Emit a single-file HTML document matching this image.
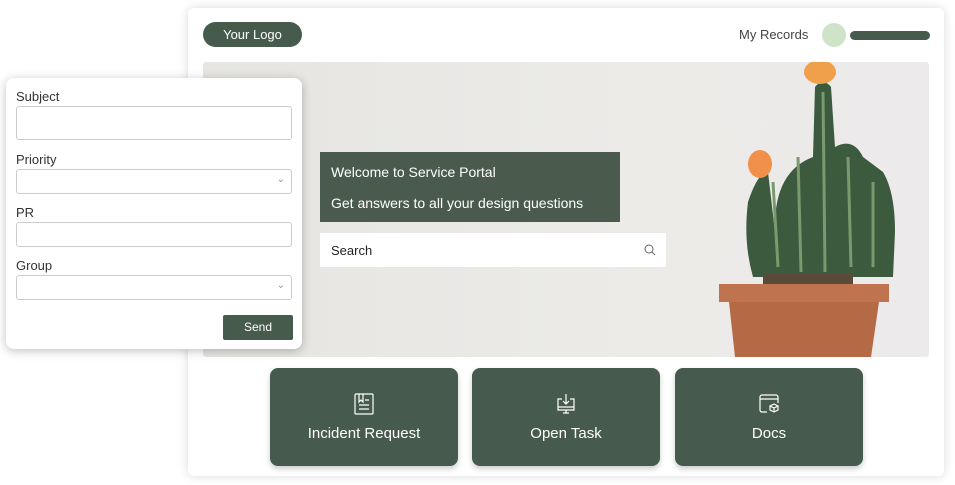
<!DOCTYPE html>
<html><head><style>
*{margin:0;padding:0;box-sizing:border-box}
body{width:955px;height:485px;background:#fff;font-family:"Liberation Sans",sans-serif;position:relative;overflow:hidden}
.a{position:absolute}
.main{left:188px;top:8px;width:756px;height:468px;background:#fff;border-radius:6px;box-shadow:0 0 10px rgba(0,0,0,.15)}
.logo{left:203px;top:22px;width:99px;height:25px;border-radius:13px;background:#475b4d;color:#fff;font-size:13px;text-align:center;line-height:25px}
.hero{left:203px;top:62px;width:726px;height:295px;background:linear-gradient(90deg,#e6e5e2,#ecebe8 60%,#eceaea);border-radius:3px;overflow:hidden}
.tile{top:368px;width:188px;height:98px;background:#465a4e;border-radius:8px;color:#fff;font-size:15px;text-align:center;box-shadow:0 3px 6px rgba(0,0,0,.2)}
.tile svg{display:block;margin:24px auto 9px}
.form{left:6px;top:78px;width:296px;height:271px;background:#fff;border-radius:8px;box-shadow:0 2px 10px rgba(0,0,0,.25)}
.lbl{font-size:13px;color:#333;left:10px}
.inp{left:10px;width:276px;border:1px solid #ccc;border-radius:3px;background:#fff}
</style></head><body>
<div class="a main"></div>
<div class="a logo">Your Logo</div>
<div class="a" style="left:739px;top:27px;font-size:13px;color:#444">My Records</div>
<div class="a" style="left:822px;top:23px;width:24px;height:24px;border-radius:50%;background:#cfe3c8"></div>
<div class="a" style="left:850px;top:31px;width:80px;height:9px;border-radius:5px;background:#475b4d"></div>
<div class="a hero">
 <svg class="a" style="left:510px;top:0" width="216" height="295">
  <path d="M62 170 Q60 110 100 95 L102 25 Q110 15 118 25 L122 85 Q140 75 150 95 L170 110 Q182 130 182 170 L180 215 L40 215 Q30 180 35 140 Q45 110 55 110 Z" fill="#3c5a3e"/>
  <ellipse cx="107" cy="10" rx="16" ry="12" fill="#f0a04a"/>
  <ellipse cx="47" cy="102" rx="12" ry="14" fill="#f0904a"/>
  <path d="M60 120 L65 205 M85 95 L88 210 M110 30 L112 210 M135 95 L138 205 M160 120 L160 205" stroke="#7a9a6e" stroke-width="3"/>
  <rect x="50" y="212" width="90" height="10" fill="#5a4a3a"/>
  <path d="M6 222 L176 222 L176 240 L166 240 L158 295 L22 295 L16 240 L6 240 Z" fill="#b56a46"/>
  <rect x="6" y="222" width="170" height="18" fill="#bf734f"/>
 </svg>
</div>
<div class="a" style="left:320px;top:152px;width:300px;height:70px;background:#4a5a4c;color:#fff;font-size:14px;padding:12px 11px;line-height:31px"><div style="line-height:16px">Welcome to Service Portal</div><div style="margin-top:15px;line-height:16px">Get answers to all your design questions</div></div>
<div class="a" style="left:320px;top:233px;width:346px;height:34px;background:#fff;font-size:13px;color:#222;padding:10px 11px">Search
 <svg class="a" style="right:10px;top:11px" width="12" height="12"><circle cx="5" cy="5" r="4" stroke="#666" fill="none"/><path d="M8 8l3 3" stroke="#666"/></svg></div>
<div class="a tile" style="left:270px"><svg width="24" height="24" fill="none" stroke="#fff" stroke-width="1.2"><rect x="3" y="2" width="18" height="20" rx="1"/><path d="M7 2v8l2-2 2 2V2M13 8h4M7 13h10M7 17h10"/></svg>Incident Request</div>
<div class="a tile" style="left:472px"><svg width="24" height="24" fill="none" stroke="#fff" stroke-width="1.2"><path d="M8 7H4v11h16V7h-4M12 2v10M9 9l3 3 3-3M4 15h16M12 18v3M9 21h6"/></svg>Open Task</div>
<div class="a tile" style="left:675px"><svg width="24" height="24" fill="none" stroke="#fff" stroke-width="1.2"><path d="M10 20H5a2 2 0 01-2-2V5a2 2 0 012-2h14a2 2 0 012 2v6M3 7h18"/><path d="M17 12l4 2v4l-4 2-4-2v-4zM13 14l4 2 4-2M17 16v4"/></svg>Docs</div>
<div class="a form">
 <div class="a lbl" style="top:11px">Subject</div>
 <div class="a inp" style="top:28px;height:34px"></div>
 <div class="a lbl" style="top:74px">Priority</div>
 <div class="a inp" style="top:91px;height:25px"><span class="a" style="right:6px;top:4px;font-size:10px;color:#999">⌄</span></div>
 <div class="a lbl" style="top:127px">PR</div>
 <div class="a inp" style="top:144px;height:25px"></div>
 <div class="a lbl" style="top:180px">Group</div>
 <div class="a inp" style="top:197px;height:25px"><span class="a" style="right:6px;top:4px;font-size:10px;color:#999">⌄</span></div>
 <div class="a" style="left:217px;top:237px;width:70px;height:25px;background:#475b4d;color:#fff;font-size:12px;text-align:center;line-height:25px;border-radius:2px">Send</div>
</div>
</body></html>
